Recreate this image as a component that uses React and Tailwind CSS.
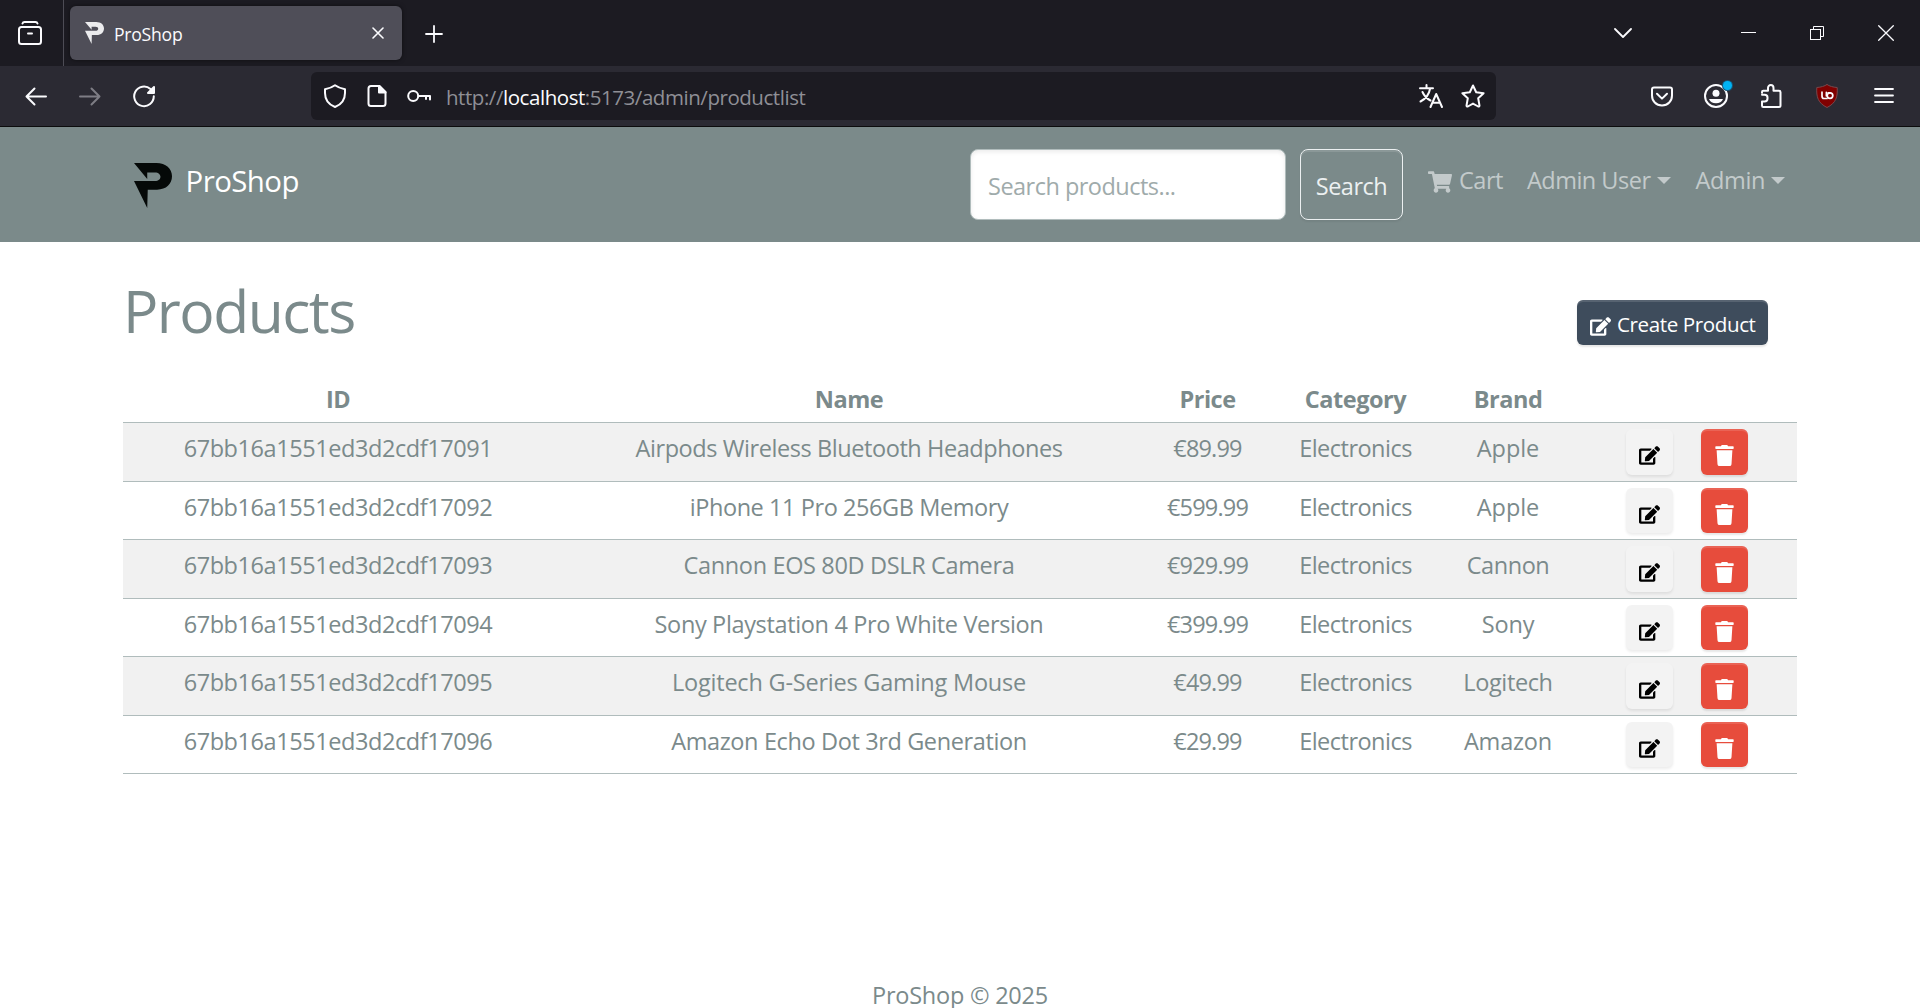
import React from "react";
import { FaEdit, FaTrash, FaShoppingCart } from "react-icons/fa";

const PRODUCTS = [
  { id: "67bb16a1551ed3d2cdf17091", name: "Airpods Wireless Bluetooth Headphones", price: "€89.99", category: "Electronics", brand: "Apple", brandClass: "tracking-[-0.002em]" },
  { id: "67bb16a1551ed3d2cdf17092", name: "iPhone 11 Pro 256GB Memory", price: "€599.99", category: "Electronics", brand: "Apple", brandClass: "tracking-[-0.002em]" },
  { id: "67bb16a1551ed3d2cdf17093", name: "Cannon EOS 80D DSLR Camera", price: "€929.99", category: "Electronics", brand: "Cannon", nameClass: "tracking-[-0.015em]", brandClass: "tracking-[-0.018em]" },
  { id: "67bb16a1551ed3d2cdf17094", name: "Sony Playstation 4 Pro White Version", price: "€399.99", category: "Electronics", brand: "Sony", nameClass: "tracking-[-0.015em]", brandClass: "tracking-[-0.008em]" },
  { id: "67bb16a1551ed3d2cdf17095", name: "Logitech G-Series Gaming Mouse", price: "€49.99", category: "Electronics", brand: "Logitech", nameClass: "tracking-[-0.009em]", brandClass: "tracking-[-0.016em]" },
  { id: "67bb16a1551ed3d2cdf17096", name: "Amazon Echo Dot 3rd Generation", price: "€29.99", category: "Electronics", brand: "Amazon", nameClass: "tracking-[-0.016em]", brandClass: "tracking-[-0.008em]" },
];

const COLUMNS = "grid grid-cols-[430px_592px_125px_171px_134px_222px]";

function Icon({ size = 24, className = "", children, stroke = 2 }) {
  return (
    <svg
      width={size}
      height={size}
      viewBox={`0 0 ${size} ${size}`}
      fill="none"
      stroke="currentColor"
      strokeWidth={stroke}
      strokeLinecap="round"
      strokeLinejoin="round"
      className={`shrink-0 ${className}`}
    >
      {children}
    </svg>
  );
}

function Logo({ className }) {
  return (
    <svg viewBox="0 0 112 133" preserveAspectRatio="none" fill="currentColor" className={className}>
      <path d="M0 0H66C94 0 112 17 112 39.500C112 62 95 79 68 79H40.500L39 133L0 53.500H62C72 53.500 78 48 78 41C78 33.500 72 28 62 28H39V47Z" />
    </svg>
  );
}

function TabStrip() {
  return (
    <div className="flex h-[66px] bg-[#1c1b22] text-[#fbfbfe]">
      <div className="flex w-16 items-center border-r border-[#4d4c55] pl-[18px]">
        <Icon>
          <path d="M4.500 2.500C4.800 1.500 5.500 1 6.500 1H17.500C18.500 1 19.200 1.500 19.500 2.500" />
          <rect x="1" y="6" width="22" height="17" rx="2.500" />
          <path d="M10 12.500H14" />
        </Icon>
      </div>
      <div className="mt-1.5 ml-1.5 flex h-[54px] w-[332px] items-center rounded-md bg-[#4f4e58] pr-[18px] pl-[15px] shadow-[0_0_4px_rgba(0,0,0,0.5)]">
        <Logo className="h-[22px] w-[19px] text-[#ececee]" />
        <span className="mt-px ml-2.5 text-[17.6px] leading-6 tracking-[-0.014em]">ProShop</span>
        <Icon size={12} stroke={1.6} className="ml-auto">
          <path d="M1 1L11 11M11 1L1 11" />
        </Icon>
      </div>
      <Icon size={18} stroke={1.8} className="mt-[25px] ml-[23px]">
        <path d="M9 1V17M1 9H17" />
      </Icon>
      <div className="ml-auto flex h-full items-center">
        <Icon size={18} stroke={1.8} className="mr-[109px]">
          <path d="M1 5L9 13L17 5" />
        </Icon>
        <Icon size={15} stroke={1} className="mr-[54px]">
          <path d="M0 6.500H15" strokeLinecap="butt" />
        </Icon>
        <Icon size={14} stroke={1} className="mr-[54px]">
          <g strokeLinejoin="miter">
            <rect x="0.500" y="3.500" width="10" height="10" />
            <path d="M3.500 3.500V0.500H13.500V10.500H10.500" />
          </g>
        </Icon>
        <Icon size={16} stroke={1.3} className="mr-[26px]">
          <path d="M0.700 0.700L15.300 15.300M15.300 0.700L0.700 15.300" />
        </Icon>
      </div>
    </div>
  );
}

function AddressBar() {
  return (
    <div className="flex h-12 w-[1185px] items-center rounded-md bg-[#1c1b22] pr-[11px] pl-3">
      <Icon>
        <path d="M12 1.200C9 3.400 5.500 4.500 2 5.200V9C2 15.500 5.500 20.500 12 23C18.500 20.500 22 15.500 22 9V5.200C18.500 4.500 15 3.400 12 1.200Z" />
      </Icon>
      <Icon className="ml-[18px]">
        <path d="M6 2H14.500L20.500 8V19.500C20.500 21 19.500 22 18 22H6C4.500 22 3.500 21 3.500 19.500V4.500C3.500 3 4.500 2 6 2Z" />
        <path d="M14 2V8.500H20.500Z" fill="currentColor" />
      </Icon>
      <Icon className="ml-[18px]">
        <circle cx="6.200" cy="12" r="5" />
        <path d="M11.500 12H23V15.500M19 12V15" />
      </Icon>
      <div className="mt-px ml-[15px] text-[20.500px] leading-8 tracking-[-0.022em] text-[#8f8f96]">
        http://<span className="text-[#fbfbfe]">localhost</span>:5173/admin/productlist
      </div>
      <Icon className="ml-auto">
        <path d="M1 4.300H14M7.500 1V4.300M3.500 8C5.500 12.500 8.500 15 11.500 16.500M11 5C10 10.500 6.500 15 1.500 17.500" />
        <path d="M11.500 23L17.200 10L23 23M13.500 18.800H21" />
      </Icon>
      <Icon className="ml-[18px]">
        <path d="M12 1.500L15.200 8.200L22.600 9.200L17.200 14.300L18.500 21.600C18.500 22.400 17.900 22.800 17.200 22.500L12 19.600L6.800 22.500C6.100 22.800 5.500 22.400 5.500 21.600L6.800 14.300L1.400 9.200L8.800 8.200Z" />
      </Icon>
    </div>
  );
}

function Toolbar() {
  return (
    <div className="flex h-[61px] items-center border-b border-[#0c0c0d] bg-[#2b2a33] text-[#fbfbfe]">
      <Icon className="ml-6">
        <path d="M22 12.500H2.500M10.500 4.500L2.500 12.500L10.500 20.500" />
      </Icon>
      <Icon className="ml-[30px] text-[#7e7d85]">
        <path d="M2 12.500H21.500M13.500 4.500L21.500 12.500L13.500 20.500" />
      </Icon>
      <Icon className="ml-[30px]">
        <path d="M21.800 12.300A9.800 9.800 0 1 1 18.500 5" />
        <path d="M22 3V9H16Z" fill="currentColor" />
      </Icon>
      <div className="ml-[155px] flex">
        <AddressBar />
      </div>
      <div className="mr-[26px] ml-auto flex items-center">
        <Icon className="mr-[30px]">
          <path d="M4 3.500H20C21.500 3.500 22 4.200 22 5.500V11.500C22 17 18 21.500 12 21.500C6 21.500 2 17 2 11.500V5.500C2 4.200 2.500 3.500 4 3.500Z" />
          <path d="M7 9.800L12 14.600L17 9.800" />
        </Icon>
        <div className="relative mr-[31px]">
          <Icon>
            <circle cx="12" cy="12" r="11" />
            <circle cx="12" cy="9.300" r="3.500" fill="currentColor" stroke="none" />
            <path d="M5 15H19C17.800 18 15.500 19.200 12 19.200C8.500 19.200 6.200 18 5 15Z" fill="currentColor" stroke="none" />
          </Icon>
          <span className="absolute -top-[3px] left-[19px] size-[9px] rounded-full bg-[#00b3f4] shadow-[0_0_0_1px_#15577a]" />
        </div>
        <Icon className="mr-8">
          <path d="M3 8.800V8C3 7.300 3.500 6.800 4.300 6.800H9V4C9 2.200 10.200 1 11.800 1C13.400 1 14.500 2.200 14.500 4V6.800H20C21 6.800 21.500 7.300 21.500 8.200V21.500C21.500 22.400 21 23 20 23H4.300C3.500 23 3 22.400 3 21.500V17.500H5.500C7.200 17.500 8.500 16.300 8.500 14.500V13.500C8.500 12 7.200 10.800 5.500 10.800H3" />
        </Icon>
        <Icon className="mr-[35px]">
          <path d="M12 0.500C9.500 2.300 6 3.200 1.800 3.500C1.200 13 3 19 12 23.500C21 19 22.800 13 22.200 3.500C18 3.200 14.500 2.300 12 0.500Z" fill="#800000" stroke="#78474c" strokeWidth="1" />
          <path d="M7 8.200V12C7 13.700 7.800 14.500 9 14.500H12" strokeWidth="1.700" />
          <path d="M11.300 8.200V12M13 8.800H15" strokeWidth="1.500" />
          <circle cx="15" cy="11.600" r="2.800" strokeWidth="1.700" />
        </Icon>
        <Icon size={20} stroke={1.8}>
          <path d="M1 3H19M1 9.500H19M1 16H19" />
        </Icon>
      </div>
    </div>
  );
}

function Caret() {
  return <span className="ml-1.5 h-0 w-0 border-x-[7px] border-t-[7px] border-x-transparent border-t-current" />;
}

function Header() {
  return (
    <header className="flex h-[115px] bg-[#7b8a8a] px-[123px]">
      <div className="flex h-full items-start pl-[11px]">
        <Logo className="mt-9 h-[45px] w-[38px] text-[#050908]" />
        <span className="mt-[34px] ml-[13.500px] text-[29.400px] leading-10 tracking-[-0.018em] text-white">ProShop</span>
      </div>
      <div className="ml-auto flex items-start pt-[22px]">
        <input
          readOnly
          placeholder="Search products..."
          className="h-[71px] w-[316px] rounded-lg border border-[#b0bcbc] bg-white px-[17px] pt-0.5 text-[23.500px] tracking-[-0.022em] text-[#7b8a8b] shadow-[inset_0_2px_4px_rgba(0,0,0,0.08)] placeholder:text-[#9fabab] focus:outline-none"
        />
        <button className="ml-3.5 h-[71px] w-[103px] rounded-lg border border-[#ecf0f1] pt-1 text-[23.500px] tracking-[-0.020em] text-[#ecf0f1] shadow-[inset_0_2px_0_rgba(255,255,255,0.12),0_2px_2px_rgba(0,0,0,0.06)]">
          Search
        </button>
      </div>
      <nav className="mt-[35px] mr-[12px] ml-[25px] flex h-9 items-center self-start text-[23.500px] leading-9 tracking-[-0.021em] text-[#c3cacb]">
        <FaShoppingCart className="mt-1 size-6" />
        <span className="ml-[7px]">Cart</span>
        <span className="ml-6">Admin User</span>
        <Caret />
        <span className="ml-[25px] tracking-[-0.016em]">Admin</span>
        <Caret />
      </nav>
    </header>
  );
}

function ProductRow({ product, striped }) {
  return (
    <div className={`${COLUMNS} h-[58.500px] border-b border-[#b0bcbc] ${striped ? "bg-[#f1f1f1]" : "bg-white"}`}>
      <div className="pt-[7px] text-center">{product.id}</div>
      <div className={`pt-[7px] text-center ${product.nameClass ?? ""}`}>{product.name}</div>
      <div className="pt-[7px] text-center tracking-[-0.035em]">{product.price}</div>
      <div className="pt-[7px] text-center tracking-[-0.022em]">{product.category}</div>
      <div className={`pt-[7px] text-center ${product.brandClass}`}>{product.brand}</div>
      <div className="flex gap-7 pt-1.5 pl-[51px]">
        <button className="flex h-[45.500px] w-[47px] justify-center rounded-md bg-[#f3f3f3] pt-4 text-black shadow-[0_2px_3px_rgba(0,0,0,0.08)]">
          <FaEdit className="size-[21px]" />
        </button>
        <button className="flex h-[45.500px] w-[47px] justify-center rounded-md bg-[#e74c3c] pt-4 text-white shadow-[inset_0_2px_0_rgba(255,255,255,0.13),0_2px_2px_rgba(0,0,0,0.1)]">
          <FaTrash className="size-[21px]" />
        </button>
      </div>
    </div>
  );
}

export default function App() {
  return (
    <div className="flex h-[1008px] w-[1920px] flex-col overflow-hidden bg-white font-['Open_Sans','Noto_Sans',sans-serif]">
      <TabStrip />
      <Toolbar />
      <Header />
      <main className="flex-1 px-[123px] text-[23.500px] leading-9 tracking-[-0.018em] text-[#7b8a8b]">
        <div className="flex h-[132px] justify-between">
          <h1 className="mt-8 text-[58.800px] leading-[72px] tracking-[-0.026em]">Products</h1>
          <button className="mt-[58px] mr-[29px] flex h-[45px] w-[191px] items-center rounded-md bg-[#3e4c5c] pl-[13px] text-[20.600px] tracking-[-0.020em] text-white shadow-[inset_0_2px_0_rgba(255,255,255,0.13),0_2px_2px_rgba(0,0,0,0.1)]">
            <FaEdit className="mt-[7px] size-[21px]" />
            <span className="mt-0.5 ml-1.5 leading-8">Create Product</span>
          </button>
        </div>
        <div className={`${COLUMNS} h-[49px] border-b border-[#b0bcbc] pt-[7px] text-center font-bold tracking-[-0.020em]`}>
          <span>ID</span>
          <span>Name</span>
          <span>Price</span>
          <span>Category</span>
          <span>Brand</span>
        </div>
        {PRODUCTS.map((product, i) => (
          <ProductRow key={product.id} product={product} striped={i % 2 === 0} />
        ))}
      </main>
      <footer className="h-[26px] shrink-0 text-center text-[23.500px] leading-[26px] tracking-[-0.010em] text-[#7b8a8b]">
        ProShop © 2025
      </footer>
    </div>
  );
}
